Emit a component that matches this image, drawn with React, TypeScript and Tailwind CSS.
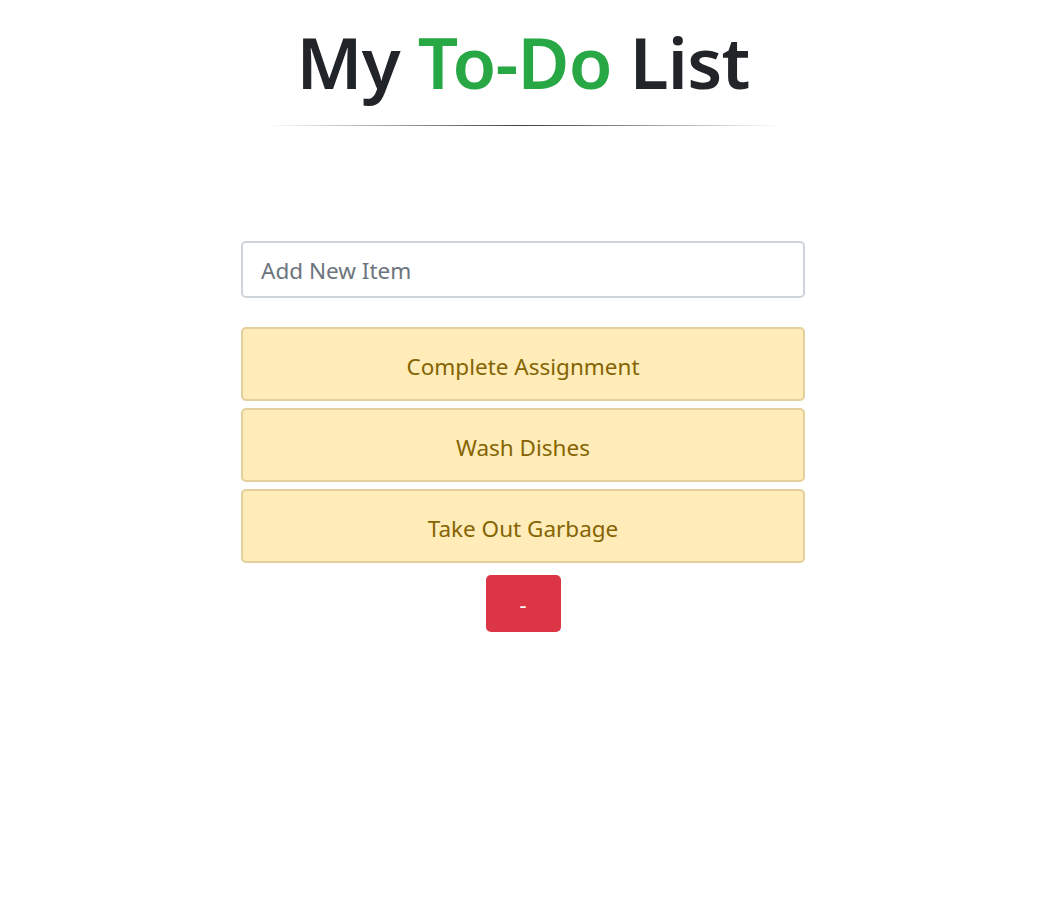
import React from "react";

export default function App() {
  const items = ["Complete Assignment", "Wash Dishes", "Take Out Garbage"];
  return (
    <div className="min-h-[900px] w-full bg-white pl-[2px]" style={{ fontFamily: '"Noto Sans", "Open Sans", sans-serif' }}>
      <div className="flex flex-col items-center">
        <h1 className="mt-[19px] text-[71px] leading-[1.2] font-semibold text-[#212529] tracking-[-0.7px]">
          My <span className="text-[#28a745]">To-Do</span> List
        </h1>
        <div className="mt-[21px] h-px w-[515px] bg-[linear-gradient(to_right,rgba(0,0,0,0),rgba(0,0,0,0.75),rgba(0,0,0,0))]" />
        <div className="mt-[115px] flex w-[564px] flex-col">
          <input
            className="h-[57px] w-full rounded-[5px] border-2 border-[#ced4da] px-[18px] pt-[2px] text-[22.5px] text-[#495057] placeholder:text-[#6c757d] outline-none"
            placeholder="Add New Item"
          />
          <div className="mt-[29px] flex flex-col gap-[7px]">
            {items.map((t) => (
              <div
                key={t}
                className="flex h-[74px] items-center justify-center rounded-[5px] border-2 border-[#e3d09b] bg-[#ffecb8] pt-[5px] text-[22.5px] text-[#856404]"
              >
                {t}
              </div>
            ))}
          </div>
          <div className="mt-[12px] flex justify-center">
            <button className="h-[57px] w-[75px] rounded-[5px] bg-[#dc3545] pt-[2px] text-[22px] text-white">-</button>
          </div>
        </div>
      </div>
    </div>
  );
}
